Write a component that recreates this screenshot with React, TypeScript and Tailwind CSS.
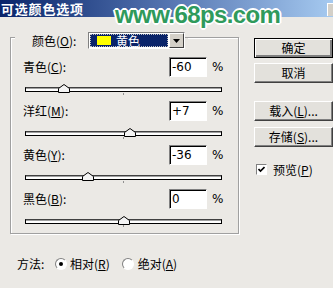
import React from "react";

const BG = "bg-[#ebe9e5]";

const rows = [
  { name: "青色", key: "C", value: -60, text: "-60" },
  { name: "洋红", key: "M", value: 7, text: "+7" },
  { name: "黄色", key: "Y", value: -36, text: "-36" },
  { name: "黑色", key: "B", value: 0, text: "0" },
];

function Label({ name, k }: { name: string; k: string }) {
  return (
    <span>
      {name}(<u>{k}</u>):
    </span>
  );
}

function Slider({ value }: { value: number }) {
  const pct = (value + 100) / 200;
  return (
    <div className="relative ml-[14px] mt-[7px] h-[9px] w-[197px]">
      <div className="absolute bottom-[1px] left-0 right-0 h-[5px] border border-black border-t-[#404040] bg-white shadow-[inset_0_1px_0_#a0a0a0]" />
      <div className="absolute bottom-[-2px] left-[98px] h-[2px] w-[1px] bg-[#909090]" />
      <svg
        className="absolute top-0"
        style={{ left: `calc(${pct * 100}% - 6px)` }}
        width="12"
        height="9"
        viewBox="0 0 12 9"
      >
        <path d="M0.5 8.5 V4.5 L6 0.5 L11.5 4.5 V8.5 Z" fill="#f4f4f4" stroke="#000" />
      </svg>
    </div>
  );
}

function Button({ children, def }: { children: React.ReactNode; def?: boolean }) {
  return (
    <div
      className={`flex h-[20px] w-[79px] items-center justify-center bg-[#e3e1dc] ${
        def
          ? "border border-black shadow-[inset_1px_1px_0_#fff,inset_-2px_-2px_0_#808080]"
          : "border border-b-[#404040] border-l-white border-r-[#404040] border-t-white shadow-[inset_-1px_-1px_0_#808080]"
      }`}
    >
      {children}
    </div>
  );
}

export default function App() {
  return (
    <div
      className={`relative h-[288px] w-[333px] overflow-hidden ${BG} font-['Noto_Sans_CJK_SC','Noto_Sans',sans-serif] text-[12px] leading-none text-black`}
    >
      {/* title bar */}
      <div className="flex h-[17px] items-center justify-between bg-linear-to-r from-[#0a246a] via-[#5574b0] to-[#a6caf0]">
        <span className="pl-[1px] text-[13px] font-bold tracking-[0.8px] text-white">可选颜色选项</span>
        <div className="mt-[1px] h-[13px] w-[6px] border-l border-t border-white bg-[#d4d0c8]" />
      </div>

      {/* watermark */}
      <div className="absolute left-[115px] top-[2px] font-['Liberation_Sans',sans-serif] text-[24px] font-bold leading-[26px] tracking-[-0.6px] text-[#2f9a5c] [text-shadow:1px_0_0_#fff,-1px_0_0_#fff,0_1px_0_#fff,0_-1px_0_#fff,1px_1px_0_#fff,-1px_-1px_0_#fff,1px_-1px_0_#fff,-1px_1px_0_#fff,2px_0_0_#fff,-2px_0_0_#fff,0_2px_0_#fff,0_-2px_0_#fff]">
        www.68ps.com
      </div>

      <div className="flex">
        {/* left column */}
        <div className="w-[254px]">
          <div className="ml-[10px] mt-[20px] h-[197px] w-[229px] border border-[#a0a0a0] shadow-[inset_1px_1px_0_#fff,1px_1px_0_#fff]">
            <div className="-mt-[6px] ml-[4px] flex items-center">
              <span className={`flex h-[17px] w-[73px] items-center ${BG} pl-[17px]`}>
                <Label name="颜色" k="O" />
              </span>
              <div className="flex h-[17px] w-[97px] border border-b-white border-l-[#808080] border-r-white border-t-[#808080] bg-white">
                <div className="m-[1px] flex flex-1 items-center border border-dotted border-[#c0c0c0] bg-[#0a246a]">
                  <div className="ml-[6px] h-[9px] w-[14px] bg-[#ffff00]" />
                  <span className="ml-[5px] text-white">黄色</span>
                </div>
                <div className="flex w-[15px] items-center justify-center border border-b-[#404040] border-l-white border-r-[#404040] border-t-white bg-[#d4d0c8]">
                  <svg width="7" height="4" viewBox="0 0 7 4">
                    <path d="M0 0 H7 L3.5 4 Z" fill="#000" />
                  </svg>
                </div>
              </div>
              <span className={`h-[6px] w-[3px] ${BG}`} />
            </div>

            {rows.map((r) => (
              <div key={r.key} className="mt-[8px]">
                <div className="flex h-[20px] items-center">
                  <div className="w-[158px] pl-[12px]">
                    <Label name={r.name} k={r.key} />
                  </div>
                  <div className="flex h-[20px] w-[38px] items-center border border-b-white border-l-[#808080] border-r-white border-t-[#808080] bg-white pl-[2px] shadow-[inset_1px_1px_0_#000] font-['DejaVu_Sans',sans-serif] text-[12px]">
                    {r.text}
                  </div>
                  <span className="ml-[5px] font-['DejaVu_Sans',sans-serif] text-[12px]">%</span>
                </div>
                <Slider value={r.value} />
              </div>
            ))}
          </div>

          <div className="mt-[23px] flex h-[14px] items-center">
            <span className="ml-[17px] w-[38px]">方法:</span>
            <div className="flex h-[12px] w-[12px] items-center justify-center rounded-full border border-b-white border-l-[#808080] border-r-white border-t-[#808080] bg-white">
              <div className="h-[4px] w-[4px] rounded-full bg-black" />
            </div>
            <span className="ml-[3px]">
              相对(<u>R</u>)
            </span>
            <div className="ml-[12px] h-[12px] w-[12px] rounded-full border border-b-white border-l-[#808080] border-r-white border-t-[#808080] bg-white" />
            <span className="ml-[4px]">
              绝对(<u>A</u>)
            </span>
          </div>
        </div>

        {/* right column */}
        <div className="flex flex-col pt-[21px]">
          <Button def>确定</Button>
          <div className="mt-[5px]">
            <Button>取消</Button>
          </div>
          <div className="mt-[18px]">
            <Button>
              载入(<u>L</u>)...
            </Button>
          </div>
          <div className="mt-[6px]">
            <Button>
              存储(<u>S</u>)...
            </Button>
          </div>
          <div className="ml-[2px] mt-[16px] flex h-[13px] items-center">
            <div className="flex h-[11px] w-[11px] items-center justify-center border border-b-white border-l-[#808080] border-r-white border-t-[#808080] bg-white">
              <svg width="7" height="7" viewBox="0 0 7 7">
                <path d="M0.5 3 L2.5 5 L6.5 1" fill="none" stroke="#000" strokeWidth="1.6" />
              </svg>
            </div>
            <span className="ml-[6px]">
              预览(<u>P</u>)
            </span>
          </div>
        </div>
      </div>
    </div>
  );
}
